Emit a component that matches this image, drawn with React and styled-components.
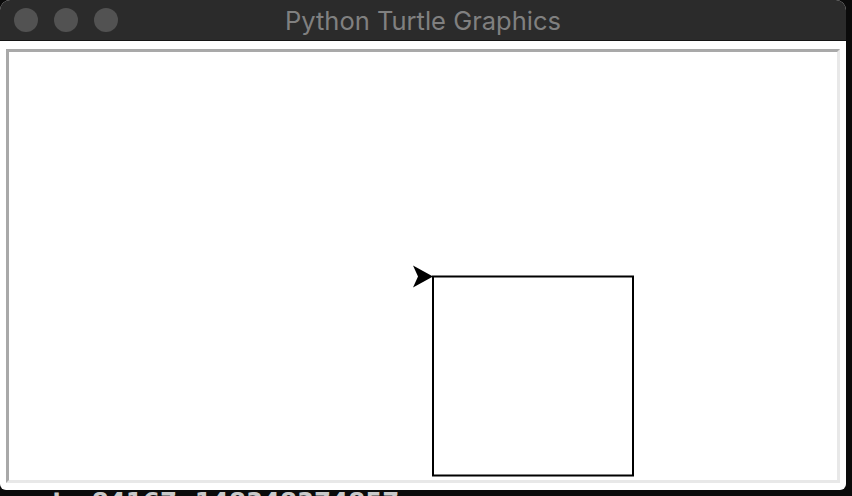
import React from 'react';
import styled, { createGlobalStyle } from 'styled-components';

const GlobalStyle = createGlobalStyle`
  html, body {
    margin: 0;
    padding: 0;
    background: #000;
    width: 852px;
    height: 496px;
    overflow: hidden;
  }
`

const Page = styled.div`
  width: 852px;
  height: 496px;
  display: flex;
  flex-direction: column;
  overflow: hidden;
  background: #0b0b0b;
`

const Window = styled.div`
  width: 846px;
  height: 490px;
  display: flex;
  flex-direction: column;
  background: #fff;
  border-radius: 10px 10px 6px 6px;
  overflow: hidden;
  flex-shrink: 0;
`

const TitleBar = styled.div`
  height: 40px;
  flex-shrink: 0;
  display: flex;
  align-items: center;
  position: relative;
  background: #2b2b2b;
  border-bottom: 1px solid #141414;
  padding-left: 14px;
  gap: 16px;
`

const Light = styled.span`
  width: 24px;
  height: 24px;
  border-radius: 50%;
  background: #525252;
`

const Title = styled.div`
  position: absolute;
  left: 0;
  right: 0;
  top: 0;
  bottom: 0;
  display: flex;
  align-items: center;
  justify-content: center;
  font-family: Inter, "Liberation Sans", sans-serif;
  font-size: 25.5px;
  color: #808080;
  pointer-events: none;
`

const Body = styled.div`
  flex: 1;
  padding: 8px 6px 7px 6px;
  display: flex;
`

const Canvas = styled.div`
  flex: 1;
  border-style: solid;
  border-width: 3px;
  border-color: #a9a9a9 #e8e8e8 #e8e8e8 #a9a9a9;
  background: #fff;
  position: relative;
`

const Drawing = styled.svg`
  display: block;
  width: 100%;
  height: 100%;
`

const Console = styled.div`
  height: 6px;
  overflow: hidden;
  padding-left: 52px;
  font-family: "DejaVu Sans", "Liberation Sans", sans-serif;
  font-weight: 700;
  font-size: 24.5px;
  line-height: 24px;
  color: #c9c9c9;
  white-space: nowrap;
`

const Gap = styled.span`
  display: inline-block;
  width: 28px;
`

const App = () => (
  <>
    <GlobalStyle />
    <Page>
      <Window>
        <TitleBar>
          <Light />
          <Light />
          <Light />
          <Title>Python Turtle Graphics</Title>
        </TitleBar>
        <Body>
          <Canvas>
            <Drawing viewBox="0 0 828 427">
              <rect x="424" y="224" width="200" height="199" fill="none" stroke="#000" strokeWidth="2" />
              <polygon points="424,224 404,213 409,224 404,235" fill="#000" />
            </Drawing>
          </Canvas>
        </Body>
      </Window>
      <Console>t<Gap />84167, 148348374857</Console>
    </Page>
  </>
);

export default App
